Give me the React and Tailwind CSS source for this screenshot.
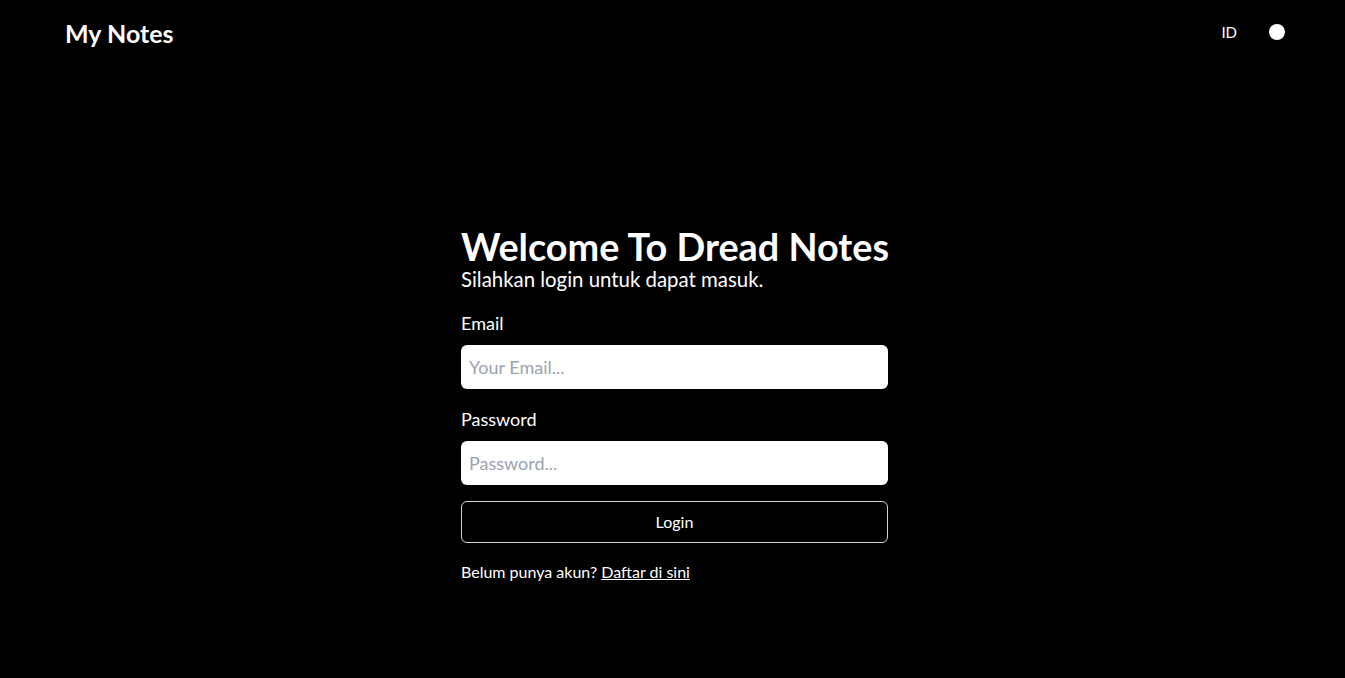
import React from "react";

export default function App() {
  const font = { fontFamily: '"Lato", "Open Sans", sans-serif' };
  return (
    <div className="min-h-[678px] bg-black text-white" style={font}>
      <header className="flex h-[66px] items-center justify-between pl-[65px] pr-[60px]">
        <h1 className="text-[25px] font-bold leading-none">My Notes</h1>
        <div className="mb-[2px] flex items-center gap-[32px]">
          <button className="text-[15px] leading-none text-white">ID</button>
          <span className="block h-[16px] w-[16px] rounded-full bg-white"></span>
        </div>
      </header>
      <main className="flex justify-center pl-[4px] pt-[162px]">
        <div className="w-[427px]">
          <h2 className="whitespace-nowrap text-[37.8px] font-bold leading-[38px]">Welcome To Dread Notes</h2>
          <p className="text-[20.4px] leading-[27px]">Silahkan login untuk dapat masuk.</p>
          <form className="mt-[18px] flex flex-col">
            <label className="text-[18px] leading-[24px]">Email</label>
            <input
              type="email"
              placeholder="Your Email..."
              className="mt-[10px] h-[44px] rounded-[6px] bg-white px-[8px] text-[18px] text-black placeholder:text-[#9ca3af] outline-none"
              style={font}
            />
            <label className="mt-[18px] text-[18px] leading-[24px]">Password</label>
            <input
              type="password"
              placeholder="Password..."
              className="mt-[10px] h-[44px] rounded-[6px] bg-white px-[8px] text-[18px] text-black placeholder:text-[#9ca3af] outline-none"
              style={font}
            />
            <button
              type="button"
              className="mt-[16px] h-[42px] rounded-[6px] border border-[#d4d4d4] bg-black text-[16px] text-white"
              style={font}
            >
              Login
            </button>
          </form>
          <p className="mt-[19px] text-[16px] leading-[20px]">
            Belum punya akun? <a href="#" className="underline">Daftar di sini</a>
          </p>
        </div>
      </main>
    </div>
  );
}
